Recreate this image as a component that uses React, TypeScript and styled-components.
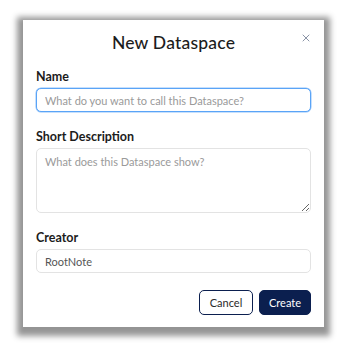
import React from "react";
import styled, { createGlobalStyle } from "styled-components";

const Global = createGlobalStyle`
  html, body { margin: 0; padding: 0; background: #ffffff; }
  body { font-family: "Lato", "Noto Sans", sans-serif; }
  * { box-sizing: border-box; }
`;

const Page = styled.div`
  width: 347px;
  height: 347px;
  padding: 20px 23px 0 23px;
`;

const Dialog = styled.div`
  position: relative;
  width: 301px;
  height: 307px;
  background: #ffffff;
  box-shadow: 0 3px 6px 6px rgba(0, 0, 0, 0.42);
  padding: 13px 13px 12px 13px;
  display: flex;
  flex-direction: column;
`;

const Title = styled.h1`
  margin: 0;
  font-size: 17.5px;
  line-height: 20px;
  font-weight: 500;
  color: #1c1c1c;
  text-align: center;
  letter-spacing: 0.2px;
`;

const Close = styled.button`
  position: absolute;
  top: 12px;
  right: 12px;
  width: 12px;
  height: 12px;
  padding: 0;
  border: none;
  background: transparent;
  display: flex;
  align-items: center;
  justify-content: center;
`;

const Field = styled.div<{ $top: number }>`
  display: flex;
  flex-direction: column;
  gap: 3px;
  margin-top: ${(p) => p.$top}px;
`;

const Label = styled.label`
  font-size: 12.5px;
  line-height: 16px;
  font-weight: 700;
  color: #1c1c1c;
`;

const Input = styled.input<{ $focused?: boolean }>`
  height: 24px;
  width: 100%;
  border: 1px solid ${(p) => (p.$focused ? "#5aa4f7" : "#e3e3e3")};
  box-shadow: ${(p) => (p.$focused ? "0 0 0 0.5px #8fc1fa" : "none")};
  border-radius: 5px;
  padding: 0 8px;
  font-family: "Lato", "Noto Sans", sans-serif;
  font-size: 11px;
  color: #555;
  outline: none;
  &::placeholder { color: #9a9a9a; }
`;

const TextArea = styled.textarea`
  height: 65px;
  width: 100%;
  border: 1px solid #e3e3e3;
  border-radius: 5px;
  padding: 6px 8px;
  font-family: "Lato", "Noto Sans", sans-serif;
  font-size: 11px;
  color: #555;
  resize: vertical;
  outline: none;
  &::placeholder { color: #9a9a9a; }
`;

const Actions = styled.div`
  display: flex;
  justify-content: flex-end;
  gap: 6px;
  margin-top: 17px;
`;

const Button = styled.button<{ $primary?: boolean }>`
  height: 25px;
  padding: 0;
  width: ${(p) => (p.$primary ? "52px" : "54px")};
  border-radius: 5px;
  border: 1px solid #0b1f4f;
  background: ${(p) => (p.$primary ? "#0b1f4f" : "#ffffff")};
  color: ${(p) => (p.$primary ? "#ffffff" : "#2a2a2a")};
  font-family: "Lato", "Noto Sans", sans-serif;
  font-size: 11px;
  cursor: pointer;
`;

export default function App() {
  return (
    <>
      <Global />
      <Page>
        <Dialog>
          <Close aria-label="Close">
            <svg width="8" height="8" viewBox="0 0 8 8">
              <path d="M1 1 L7 7 M7 1 L1 7" stroke="#8a93a6" strokeWidth="1" strokeLinecap="round" />
            </svg>
          </Close>
          <Title>New Dataspace</Title>
          <Field $top={16}>
            <Label>Name</Label>
            <Input $focused autoFocus placeholder="What do you want to call this Dataspace?" />
          </Field>
          <Field $top={17}>
            <Label>Short Description</Label>
            <TextArea placeholder="What does this Dataspace show?" />
          </Field>
          <Field $top={17}>
            <Label>Creator</Label>
            <Input defaultValue="RootNote" />
          </Field>
          <Actions>
            <Button>Cancel</Button>
            <Button $primary>Create</Button>
          </Actions>
        </Dialog>
      </Page>
    </>
  );
}
